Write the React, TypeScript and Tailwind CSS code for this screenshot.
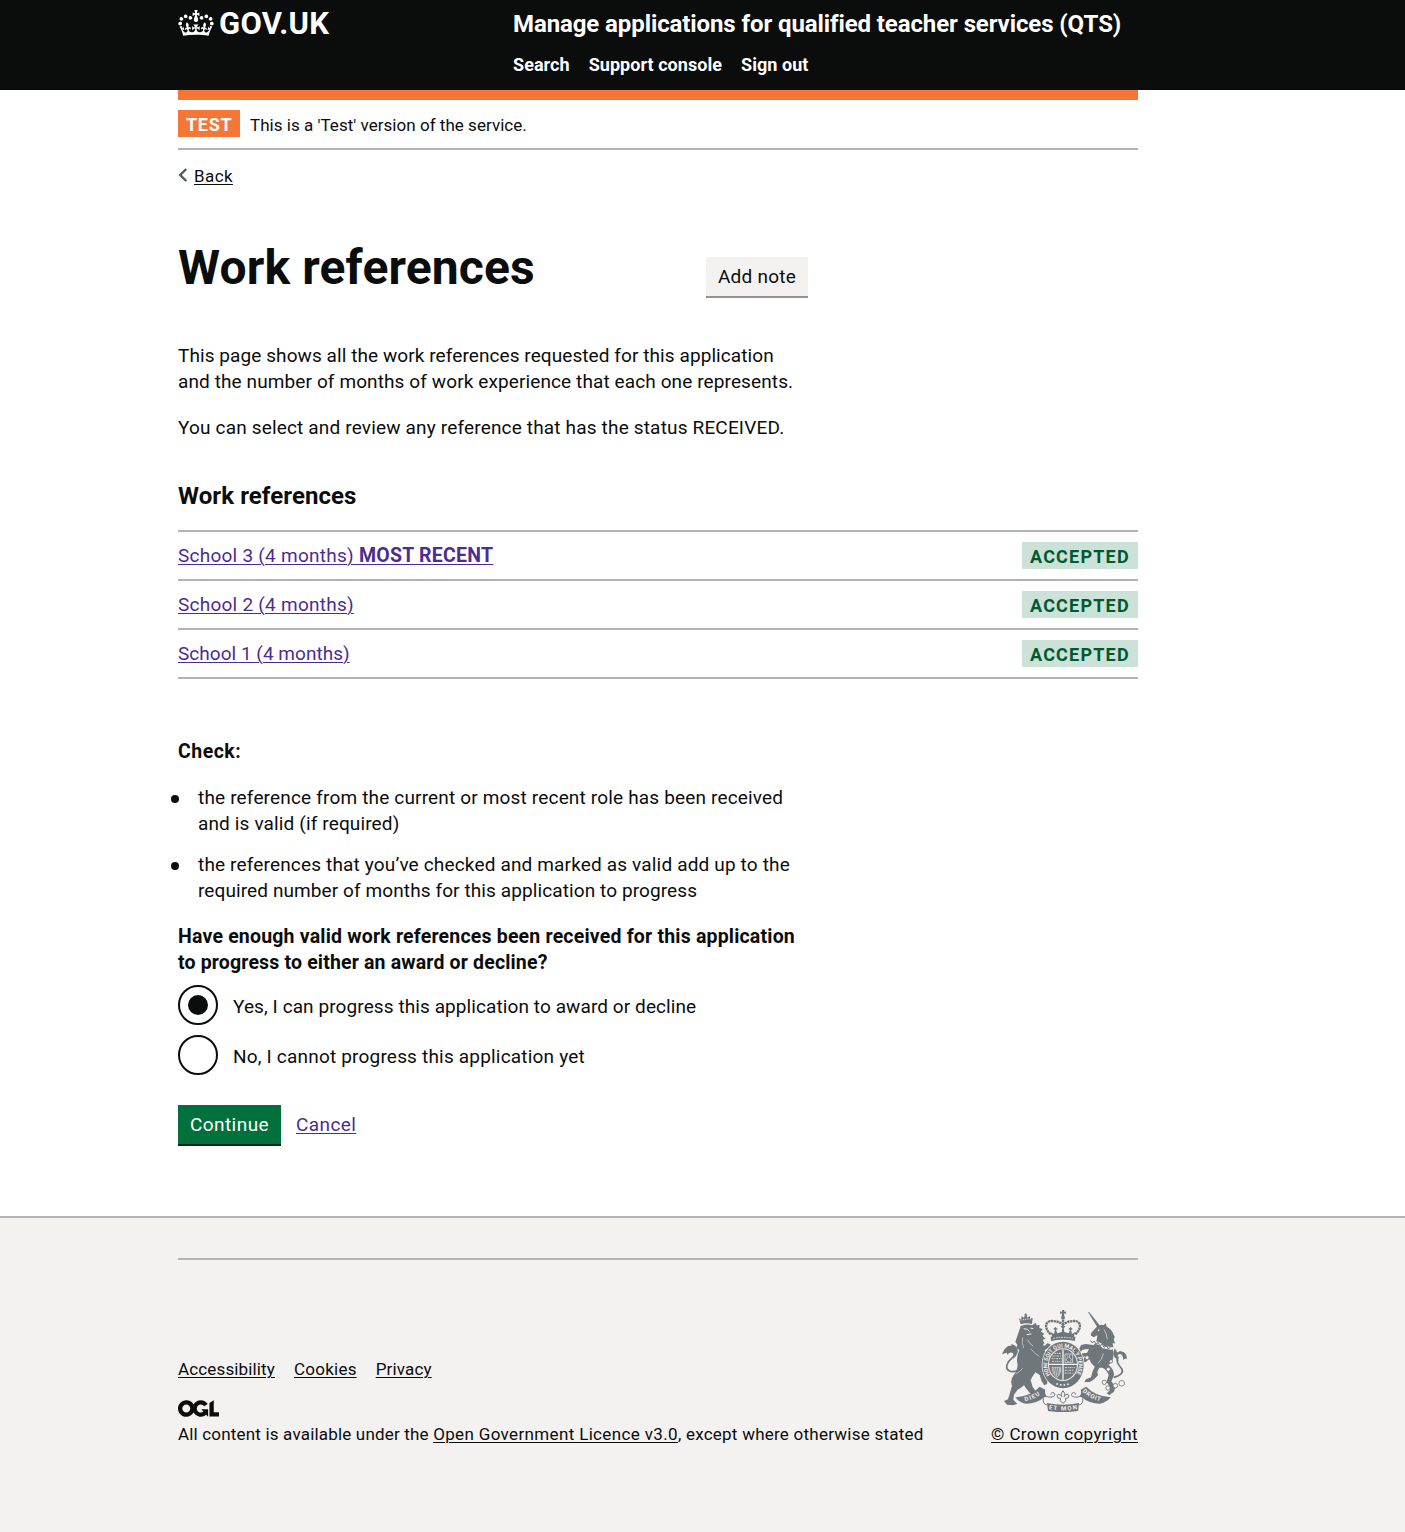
import type { ReactNode } from 'react';

const CROWN =
  'M25 30.2c3.5 1.5 7.7-.2 9.1-3.7 1.5-3.6-.2-7.8-3.9-9.2-3.6-1.4-7.6.3-9.1 3.9-1.4 3.5.3 7.5 3.9 9zM9 39.5c3.6 1.5 7.8-.2 9.2-3.7 1.5-3.6-.2-7.8-3.9-9.1-3.6-1.5-7.6.2-9.1 3.8-1.4 3.5.3 7.5 3.8 9zM4.4 57.2c3.5 1.5 7.7-.2 9.1-3.8 1.5-3.6-.2-7.7-3.9-9.1-3.5-1.5-7.6.3-9.1 3.8-1.4 3.5.3 7.6 3.9 9.1zm38.3-21.4c3.5 1.5 7.7-.2 9.1-3.8 1.5-3.6-.2-7.7-3.9-9.1-3.6-1.5-7.6.3-9.1 3.8-1.3 3.6.4 7.7 3.9 9.1zm64.4-5.6c-3.6 1.5-7.8-.2-9.1-3.7-1.5-3.6.2-7.8 3.8-9.2 3.6-1.4 7.7.3 9.2 3.9 1.3 3.5-.4 7.5-3.9 9zm15.9 9.3c-3.6 1.5-7.7-.2-9.1-3.7-1.5-3.6.2-7.8 3.7-9.1 3.6-1.5 7.7.2 9.2 3.8 1.5 3.5-.3 7.5-3.8 9zm4.7 17.7c-3.6 1.5-7.8-.2-9.2-3.8-1.5-3.6.2-7.7 3.9-9.1 3.6-1.5 7.7.3 9.2 3.8 1.3 3.5-.4 7.6-3.9 9.1zM89.3 35.8c-3.6 1.5-7.8-.2-9.2-3.8-1.4-3.6.2-7.7 3.9-9.1 3.6-1.5 7.7.3 9.2 3.8 1.4 3.6-.3 7.7-3.9 9.1zM69.7 17.7l8.9 4.7V9.3l-8.9 2.8c-.2-.3-.5-.6-.9-.9L72.4 0H59.6l3.5 11.2c-.3.3-.6.5-.9.9l-8.8-2.8v13.1l8.8-4.7c.3.3.6.7.9.9l-5 15.4v.1c-.2.8-.4 1.6-.4 2.4 0 4.1 3.1 7.5 7 8.1h.2c.3 0 .7.1 1 .1.4 0 .7 0 1-.1h.2c4-.6 7.1-4.1 7.1-8.1 0-.8-.1-1.7-.4-2.4V34l-5.1-15.4c.4-.2.7-.6 1-.9zM66 92.8c16.9 0 32.8 1.1 47.1 3.2 4-16.9 8.9-26.7 14-33.5l-9.6-3.4c1 4.9 1.1 7.2 0 10.2-1.5-1.4-3-4.3-4.2-8.7L108.6 76c2.8-2 5-3.2 7.5-3.3-4.4 9.4-10 11.9-13.6 11.2-4.3-.8-6.3-4.6-5.6-7.9 1-4.7 5.7-5.9 8-.5 4.3-8.7-3-11.4-7.6-8.8 7.1-7.2 7.9-13.5 2.1-21.1-8 6.1-8.1 12.3-4.5 20.8-4.7-5.4-12.1-2.5-9.5 6.2 3.4-5.2 7.9-2 7.2 3.1-.6 4.3-6.4 7.8-13.5 7.2-10.3-.9-10.9-8-11.2-13.8 2.5-.5 7.1 1.8 11 7.3L80.2 60c-4.1 4.4-8 5.3-12.3 5.4 1.4-4.4 8-11.6 8-11.6H55.5s6.4 7.2 7.9 11.6c-4.2-.1-8-1-12.3-5.4l1.4 16.4c3.9-5.5 8.5-7.7 10.9-7.3-.3 5.8-.9 12.8-11.1 13.8-7.2.6-12.9-2.9-13.5-7.2-.7-5 3.8-8.3 7.1-3.1 2.7-8.7-4.6-11.6-9.4-6.2 3.7-8.5 3.6-14.7-4.6-20.8-5.8 7.6-5 13.9 2.2 21.1-4.7-2.6-11.9.1-7.7 8.8 2.3-5.5 7.1-4.2 8.1.5.7 3.3-1.3 7.1-5.7 7.9-3.5.7-9-1.8-13.5-11.2 2.5.1 4.7 1.3 7.5 3.3l-4.7-15.4c-1.2 4.4-2.7 7.2-4.3 8.7-1.1-3-.9-5.3 0-10.2l-9.5 3.4c5 6.9 9.9 16.7 14 33.5 14.8-2.1 30.8-3.2 47.7-3.2z';

const OGL =
  'M421.5 142.8V.1l-50.7 32.3v161.1h112.4v-50.7zm-122.3-9.6A47.12 47.12 0 0 1 221 97.8c0-26 21.1-47.1 47.1-47.1 16.7 0 31.4 8.7 39.7 21.8l42.7-27.2A97.63 97.63 0 0 0 268.1 0c-36.5 0-68.3 20.1-85.1 49.7A98 98 0 0 0 97.8 0C43.9 0 0 43.9 0 97.8s43.9 97.8 97.8 97.8c36.5 0 68.3-20.1 85.1-49.7a97.76 97.76 0 0 0 149.6 25.4l19.4 22.2h3v-87.8h-80l24.3 27.5zM97.8 145c-26 0-47.1-21.1-47.1-47.1s21.1-47.1 47.1-47.1 47.1 21.1 47.1 47.1S123.8 145 97.8 145';

function Crest() {
  return (
    <svg
      viewBox="36 30 375 306"
      className="mr-[11px] h-[102px] w-[125px] fill-[#6f777b] font-['Roboto',sans-serif] font-bold"
      aria-hidden="true"
    >
      <defs>
        <path id="garter" d="M181 225A47 52 0 1 1 257 225" />
        <path id="dieu" d="M105 304Q136 298 158 278" />
        <path id="mon" d="M176 327Q219 336 264 327" />
        <path id="droit" d="M277 274Q300 298 334 304" />
      </defs>

      {/* royal crown */}
      <path d="M216 30h7l-1 6 6-2v8l-6-2 1 8h-8l1-8-6 2v-8l6 2z" />
      <circle cx="219" cy="53" r="6" />
      <path
        d="M182 103C160 82 166 62 188 63Q206 64 217 72M256 103C278 82 272 62 250 63Q232 64 221 72M219 60V84"
        fill="none"
        stroke="#6f777b"
        strokeWidth="7"
        strokeDasharray="7 1.5"
      />
      <path d="M182 96l10 6 3-12-5-3 6-6 7 6-5 3 4 10 13-4 2-12-5-4 7-6 7 6-5 4 2 12 13 4 4-10-5-3 7-6 6 6-5 3 3 12 10-6-5 15H187z" />
      <path d="M182 110q37-8 74 0l-1 13q-36-7-72 0z" />
      <path d="M190 115q29-6 58 0" fill="none" stroke="#f3f2f1" strokeWidth="2.5" strokeDasharray="5 3" />

      {/* lion */}
      <path d="M92 73l-5-18 6 3 2-9 7 4 3-8h5l2 8 7-5 2 8 7-3-2 19q-16-5-34 1z" />
      <circle cx="107" cy="44" r="3.5" />
      <path d="M91 60l34-4" stroke="#f3f2f1" strokeWidth="2.5" strokeDasharray="4 3" />
      <path d="M92 78q18-8 35-2l10-8 3 8 9-1-1 9 10 3-5 8 10 6-6 6 10 9-9 3 6 12-5 0 6 16-4 1q8 10 8 25-3 12 1 22l-5 26 8 22-2 9-8 4-8-12-6-19-13-8q-10 14-14 24l6 20 15 20 1 18-24 1-3-6 9-7-16-20-8-11q-9 8-19 13l-11 15-2 15 12 13-14 4-17-2-9-11 12-5 6-20 6-20q-6-17 4-31 12-14 13-33-6-20 5-44l-9-7 3-9-6-8z" />
      <path d="M101 86l11 2 7 7M121 84l9 2M110 104l14-2" fill="none" stroke="#f3f2f1" strokeWidth="3" />
      <path d="M98 112q-4 17 3 32M122 146q14 17 26 23M98 205q-11 13-21 17M113 119q6 14 17 20" fill="none" stroke="#f3f2f1" strokeWidth="1.6" />
      <path
        d="M89 208C62 224 43 209 53 190c6-14 23-19 24-34 2-14-19-15-26-4"
        fill="none"
        stroke="#6f777b"
        strokeWidth="5"
      />
      <path d="M36 163q10-28 30-26l-3-6q23 8 20 26-3 13-14 20 4-13-1-18-10-4-15 6l-3-7z" />
      <path d="M150 150l22-20 10 3-4 8-14 10 3 20-8 8z" />

      {/* unicorn */}
      <path d="M294 36l4 1 32 40-8 5z" />
      <path d="M322 79L334 74L341 76L347 69L350 80Q366 88 370 102L375 112L371 116L375 131L368 129L370 142L364 141Q372 152 370 172Q367 188 354 196Q340 205 328 203L322 215L324 226L312 238L300 246L283 246L288 238L303 232L308 214L314 200Q302 192 298 178L286 187L276 184L284 172L291 158Q300 140 312 134L320 120L322 106L311 112L302 106L304 98Z" />
      <path d="M312 150l-22-3-14 3-4 8-4-12 5-11 14-3 22 3z" />
      <path d="M306 176l-18-8-8 2-4 8-5-8 6-10 12-1 18 4z" />
      <path d="M304 125q26 3 36 16l26 5" fill="none" stroke="#f3f2f1" strokeWidth="8" />
      <path d="M302 122l5 7 6-6 5 9 7-5 4 10 8-4 5 9 8-4 4 8 8-3" fill="none" stroke="#6f777b" strokeWidth="3" />
      <path d="M348 190q24 14 24 36l-8 18 12 17-4 14-14 10-8-5 10-9-2-12-8-14 6-20q-6-18-24-24z" />
      <circle cx="326" cy="91" r="2.5" fill="#f3f2f1" />
      <path d="M342 88q9 14 10 30M340 160q-4 20-16 30" fill="none" stroke="#f3f2f1" strokeWidth="1.8" />
      <path d="M371 232c20-4 31-14 24-26-9-11-19-22-10-36" fill="none" stroke="#6f777b" strokeWidth="5" />
      <path d="M375 145q-12 18 4 32l9 7q-8-13-4-20 9-5 14 5l2 11q7-9 11-1 0-22-17-25-10-2-12 4z" />
      <g fill="#f3f2f1" stroke="#6f777b" strokeWidth="2.5">
        <circle cx="343" cy="247" r="6.5" />
        <circle cx="354" cy="264" r="6.5" />
        <circle cx="376" cy="257" r="7" />
        <circle cx="395" cy="250" r="8.5" />
        <circle cx="355" cy="208" r="6" />
        <circle cx="363" cy="184" r="5" />
        <circle cx="291" cy="173" r="6" />
      </g>

      {/* garter and shield */}
      <ellipse cx="219" cy="195" rx="64" ry="72" fill="#f3f2f1" />
      <ellipse cx="219" cy="195" rx="62" ry="70" />
      <ellipse cx="219" cy="194" rx="45" ry="49" fill="#f3f2f1" />
      <ellipse cx="219" cy="194" rx="42" ry="46" />
      <path d="M219 149v90M177 193h84" stroke="#f3f2f1" strokeWidth="4" />
      <path
        d="M188 168h27M185 176h30M186 184h29M225 203h30M224 211h28M224 219h24M193 160h22"
        stroke="#f3f2f1"
        strokeWidth="2.5"
        strokeDasharray="6 2.5 3 2"
      />
      <path d="M225 162h23v26h-23zM230 165q8 6 1 11t5 9M240 163l-2 9 6 6-4 8" fill="none" stroke="#f3f2f1" strokeWidth="2" />
      <path d="M186 202h26v12q-4 15-12 18-13-9-14-30zM191 204l4 20M197 204l3 24M203 204l2 22M209 204v14" fill="none" stroke="#f3f2f1" strokeWidth="2" />
      <text className="fill-[#f3f2f1] text-[17px]">
        <textPath href="#garter" textLength="216" lengthAdjust="spacingAndGlyphs">HONI SOIT QUI MAL Y PENSE</textPath>
      </text>
      <path d="M199 251q20 8 40 0" fill="none" stroke="#f3f2f1" strokeWidth="5" strokeDasharray="5 6" />

      {/* motto scroll */}
      <path d="M76 292q48-4 73-32l17 9q-4 10 3 21l-6 2q-22 19-55 19-21-4-32-19z" />
      <path d="M362 292q-48-4-73-32l-17 9q4 10-3 21l6 2q22 19 55 19 21-4 32-19z" />
      <path d="M171 309q48 10 96 0l-3 24q-45 7-90 0z" />
      <path
        d="M164 273q-4 21 22 18 13-3 6-12-9-4-9 5M275 273q4 21-22 18-13-3-6-12 9-4 9 5M160 295q-3 17 11 20M278 295q3 17-11 20"
        fill="none"
        stroke="#6f777b"
        strokeWidth="3"
      />
      <path d="M219 272l6 10-3 8q11-13 15-2 0 8-11 7l2 7-9 8-9-8 2-7q-11 1-11-7 4-11 15 2l-3-8z" fill="#f3f2f1" stroke="#6f777b" strokeWidth="3" />
      <g className="fill-[#f3f2f1] text-[18px]">
        <text><textPath href="#dieu" textLength="50">DIEU</textPath></text>
        <text><textPath href="#mon" textLength="86">ET MON</textPath></text>
        <text><textPath href="#droit" textLength="62">DROIT</textPath></text>
      </g>
    </svg>
  );
}

function Container({ children, className = '' }: { children: ReactNode; className?: string }) {
  return <div className={`ml-[178px] w-[960px] ${className}`}>{children}</div>;
}

function Line({ children, className }: { children: ReactNode; className: string }) {
  return <span className={`block whitespace-nowrap ${className}`}>{children}</span>;
}

const LINK = 'underline decoration-1 underline-offset-2';

const references = [
  { name: 'School 3 (4 months)', tracking: 'tracking-[0.25px]', recent: true },
  { name: 'School 2 (4 months)', tracking: 'tracking-[0.25px]', recent: false },
  { name: 'School 1 (4 months)', tracking: 'tracking-[0.03px]', recent: false },
];

export default function App() {
  return (
    <div className="flex min-h-[1532px] flex-col bg-white font-['Roboto','Liberation_Sans',sans-serif] text-[19px] leading-[26px] text-[#0b0c0c]">
      <header className="h-[90px] bg-[#0b0c0c] text-white">
        <Container className="flex">
          <a href="#" className="flex h-9 w-[335px] items-start pt-[10px]">
            <svg viewBox="0 0 132 97" className="h-[26px] w-9 fill-white" aria-hidden="true">
              <path d={CROWN} />
            </svg>
            <span className="ml-[5px] pt-px text-[31px] leading-[26px] font-bold tracking-[0.35px]">GOV.UK</span>
          </a>
          <div className="pt-[9px] font-bold whitespace-nowrap">
            <a href="#" className="block text-2xl leading-[30px] tracking-[-0.1px]">
              Manage applications for qualified teacher services (QTS)
            </a>
            <nav className="mt-[13px] flex gap-[19px] text-lg leading-[26px] tracking-[0.05px]">
              <a href="#">Search</a>
              <a href="#">Support console</a>
              <a href="#">Sign out</a>
            </nav>
          </div>
        </Container>
      </header>

      <Container>
        <div className="h-[10px] bg-[#f47738]" />
        <div className="flex h-[50px] items-start border-b-2 border-[#b1b4b6] pt-[10px] text-[17px]">
          <strong className="mr-[10px] flex h-[27px] w-[62px] items-center bg-[#f47738] pt-0.5 pl-2 text-lg tracking-[0.7px] text-white">
            TEST
          </strong>
          <span className="pt-[2px] tracking-[0.03px]">This is a 'Test' version of the service.</span>
        </div>
        <a href="#" className="mt-[13px] flex w-fit items-center text-[17px] leading-[26px] tracking-[0.4px]">
          <svg viewBox="0 0 10 16" className="mr-1.5 -mt-0.5 h-4 w-[10px]" fill="none" stroke="#505a5f" strokeWidth="2.4">
            <path d="M8.3 2 2.2 8l6.1 6" />
          </svg>
          <span className={LINK}>Back</span>
        </a>

        <main className="w-[630px] pt-10">
          <div className="flex h-[114px] items-start justify-between">
            <h1 className="pt-[14px] text-5xl leading-[50px] font-bold tracking-[0.15px]">Work references</h1>
            <button className="mt-[28px] h-[41px] w-[102px] border-b-2 border-[#929191] bg-[#f3f2f1] text-center tracking-[0.25px]">
              Add note
            </button>
          </div>
          <p className="mb-5">
            <Line className="tracking-[0.08px]">
              This page shows all the work references requested for this application
            </Line>
            <Line className="tracking-[0.11px]">
              and the number of months of work experience that each one represents.
            </Line>
          </p>
          <p>
            <Line className="tracking-[0.17px]">
              You can select and review any reference that has the status RECEIVED.
            </Line>
          </p>
          <h2 className="mt-10 text-2xl leading-[30px] font-bold tracking-[0.08px]">Work references</h2>
        </main>

        <dl className="mt-[19px] border-t-2 border-[#b1b4b6]">
          {references.map((r) => (
            <div key={r.name} className="flex h-[49px] items-start justify-between border-b-2 border-[#b1b4b6] pt-[10px]">
              <dt className="pt-px">
                <a href="#" className={`${LINK} text-[#4c2c92] ${r.tracking}`}>
                  {r.name}
                  {r.recent && <b className="text-[19.5px] tracking-[0.25px]"> MOST RECENT</b>}
                </a>
              </dt>
              <dd className="flex h-[27px] w-[116px] items-center bg-[#cce2d8] pt-0.5 pl-2 text-lg font-bold tracking-[1.2px] text-[#005a30]">
                ACCEPTED
              </dd>
            </div>
          ))}
        </dl>

        <section className="mt-[60px] w-[630px]">
          <h3 className="text-[19.5px] font-bold tracking-[0.5px]">Check:</h3>
          <ul className="mt-5 flex flex-col gap-[15px]">
            <li className="flex gap-[19px]">
              <span className="mt-[10px] -ml-[7px] size-2 rounded-full bg-[#0b0c0c]" />
              <span>
                <Line className="tracking-[0.17px]">
                  the reference from the current or most recent role has been received
                </Line>
                <Line className="tracking-[0.14px]">and is valid (if required)</Line>
              </span>
            </li>
            <li className="flex gap-[19px]">
              <span className="mt-[10px] -ml-[7px] size-2 rounded-full bg-[#0b0c0c]" />
              <span>
                <Line className="tracking-[0.16px]">
                  the references that you’ve checked and marked as valid add up to the
                </Line>
                <Line className="tracking-[0.1px]">required number of months for this application to progress</Line>
              </span>
            </li>
          </ul>
          <fieldset className="mt-5">
            <legend className="text-[19.5px] font-bold">
              <Line className="tracking-[0.19px]">
                Have enough valid work references been received for this application
              </Line>
              <Line className="tracking-[0.16px]">to progress to either an award or decline?</Line>
            </legend>
            <label className="mt-[9px] flex h-10 items-center">
              <span className="flex size-10 items-center justify-center rounded-full border-2 border-[#0b0c0c]">
                <span className="size-5 rounded-full bg-[#0b0c0c]" />
              </span>
              <span className="pt-1 pl-[15px] tracking-[0.09px]">
                Yes, I can progress this application to award or decline
              </span>
            </label>
            <label className="mt-[10px] flex h-10 items-center">
              <span className="size-10 rounded-full border-2 border-[#0b0c0c]" />
              <span className="pt-1 pl-[15px] tracking-[0.19px]">No, I cannot progress this application yet</span>
            </label>
          </fieldset>
          <div className="mt-[30px] flex items-start gap-[15px]">
            <button className="h-[41px] w-[103px] border-b-2 border-[#002d18] bg-[#00703c] tracking-[0.45px] text-white">
              Continue
            </button>
            <a href="#" className={`${LINK} mt-[7px] tracking-[0.4px] text-[#4c2c92]`}>
              Cancel
            </a>
          </div>
        </section>
      </Container>

      <footer className="mt-[70px] grow border-t-2 border-[#b1b4b6] bg-[#f3f2f1] pt-10 text-[17px]">
        <Container>
          <hr className="border-t-2 border-[#b1b4b6]" />
          <div className="flex items-end justify-between pt-[50px]">
            <div>
              <nav className="flex gap-[19px]">
                <a href="#" className={`${LINK} tracking-[0.14px]`}>Accessibility</a>
                <a href="#" className={`${LINK} tracking-[0.25px]`}>Cookies</a>
                <a href="#" className={`${LINK} tracking-[0.15px]`}>Privacy</a>
              </nav>
              <svg viewBox="0 0 483.2 195.7" className="mt-[18px] h-[17px] w-[41px] fill-[#0b0c0c]">
                <path d={OGL} />
              </svg>
              <p className="mt-1 tracking-[0.18px] whitespace-nowrap">
                All content is available under the{' '}
                <a href="#" className={`${LINK} tracking-[0.35px]`}>Open Government Licence v3.0</a>
                <span className="tracking-[0.24px]">, except where otherwise stated</span>
              </p>
            </div>
            <div className="flex flex-col items-end">
              <Crest />
              <a href="#" className={`${LINK} mt-[9px] tracking-[0.36px]`}>© Crown copyright</a>
            </div>
          </div>
        </Container>
      </footer>
    </div>
  );
}
